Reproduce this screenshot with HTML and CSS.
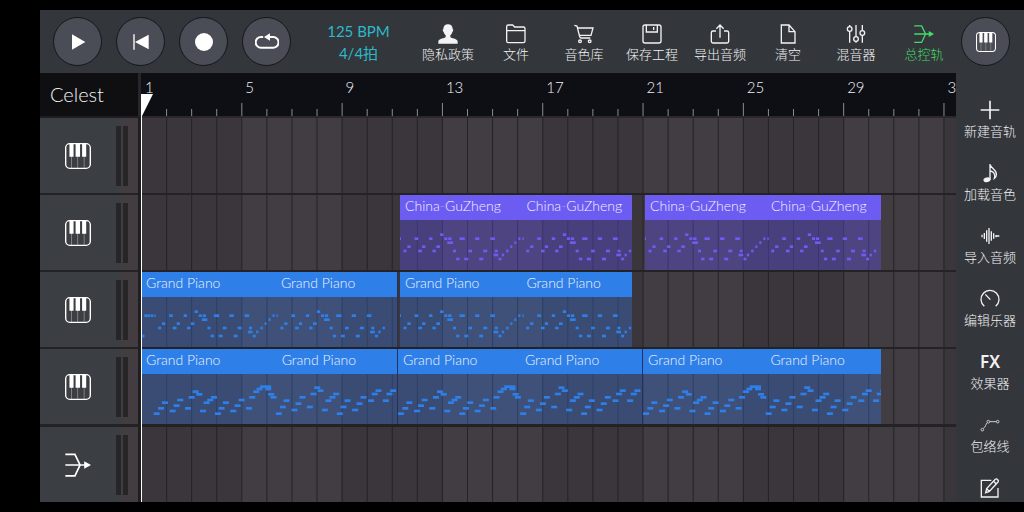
FILE: index.html
```html
<!DOCTYPE html>
<html lang="zh-CN">
<head>
<meta charset="utf-8">
<meta name="viewport" content="width=device-width, initial-scale=1">
<title>Celest</title>
<link rel="stylesheet" href="styles.css">
</head>
<body>
<svg class="defs" aria-hidden="true">
  <symbol id="i-piano" viewBox="0 0 76 76">
    <rect x="2" y="2" width="72" height="72" rx="12" fill="none" stroke="currentColor" stroke-width="4"/>
    <path d="M19 38V73M37 38V73M56 38V73" stroke="currentColor" stroke-width="2" opacity=".5"/>
    <path d="M13 3h12v37H13zM31 3h13v37H31zM50 3h12v37H50z" fill="currentColor"/>
  </symbol>
  <symbol id="i-master" viewBox="0 0 76 76">
    <path d="M1 7H29L44 38L29 70H1M1 38H60" fill="none" stroke="currentColor" stroke-width="5"/>
    <path d="M56 27L76 38L56 49z" fill="currentColor"/>
  </symbol>
</svg>
<div class="app">
  <header class="topbar">
    <div class="transport">
      <button class="round" aria-label="播放"><svg class="ic20" viewBox="0 0 60 60"><path d="M12 7L52 30L12 53z" fill="currentColor"/></svg></button>
      <button class="round" aria-label="回到开头"><svg class="ic20" viewBox="0 0 60 60"><path d="M9 7V53" stroke="currentColor" stroke-width="4"/><path d="M53 8V52L12 30z" fill="currentColor"/></svg></button>
      <button class="round" aria-label="录音"><svg class="ic20" viewBox="0 0 60 60"><circle cx="30" cy="30" r="27" fill="currentColor"/></svg></button>
      <button class="round" aria-label="循环"><svg class="ic24" viewBox="0 0 72 72"><path d="M22 21H18a15 15 0 0 0 0 32H53a15 15 0 0 0 3-32H34" fill="none" stroke="currentColor" stroke-width="6" stroke-linecap="round"/><path d="M27 21L45 10V32z" fill="currentColor"/></svg></button>
    </div>
    <button class="tempo"><span>125 BPM</span><span>4/4拍</span></button>
    <nav class="tools">
      <button class="tool"><svg class="ic20" viewBox="0 0 60 60"><path d="M30 1c9 0 14 6 14 14 3 1 2 7-1 9-1 5-4 8-6 10v5c0 4 22 4 22 14v6H1v-6c0-10 22-10 22-14v-5c-2-2-5-5-6-10-3-2-4-8-1-9C16 7 21 1 30 1z" fill="currentColor"/></svg><span>隐私政策</span></button>
      <button class="tool"><svg class="ic20 line" viewBox="0 0 60 60"><path d="M2 8q0-5 5-5h13l6 6h26q5 0 5 5v37q0 5-5 5H7q-5 0-5-5zM2 20H57"/></svg><span>文件</span></button>
      <button class="tool"><svg class="ic20 line" viewBox="0 0 60 60"><path d="M1 4l8 2L17 38q1 4 5 4H49M10 12H57L51 34H16"/><circle cx="18" cy="52" r="4"/><circle cx="47" cy="52" r="4"/></svg><span>音色库</span></button>
      <button class="tool"><svg class="ic20 line" viewBox="0 0 60 60"><rect x="3" y="3" width="54" height="54" rx="6"/><path d="M13 3V24H46V3M35 9V18"/></svg><span>保存工程</span></button>
      <button class="tool"><svg class="ic20 line" viewBox="0 0 60 60"><path d="M18 21H9q-5 0-5 5V52q0 5 5 5H51q5 0 5-5V26q0-5-5-5H42M30 41V3M19 14L30 3L41 14"/></svg><span>导出音频</span></button>
      <button class="tool"><svg class="ic20 line" viewBox="0 0 60 60"><path d="M10 3H33L51 23V57H10zM33 3V23H51"/></svg><span>清空</span></button>
      <button class="tool"><svg class="ic20 line" viewBox="0 0 60 60"><path d="M11 3V8M11 22V56M30 3V38M30 52V56M49 3V20M49 34V56"/><circle cx="11" cy="15" r="7"/><circle cx="30" cy="45" r="7"/><circle cx="49" cy="27" r="7"/></svg><span>混音器</span></button>
      <button class="tool active"><svg class="ic20"><use href="#i-master"/></svg><span>总控轨</span></button>
    </nav>
    <button class="round" aria-label="键盘"><svg class="ic20"><use href="#i-piano"/></svg></button>
  </header>

  <main class="arranger">
    <h1 class="title">Celest</h1>
    <div class="ruler">
      <svg class="ticks" id="ticks" aria-hidden="true"></svg>
      <div class="numbers" id="numbers"></div>
    </div>
    <div class="heads" id="heads"></div>
    <div class="lanes">
      <svg class="grid" id="grid" aria-hidden="true"></svg>
      <div class="lane-list" id="lanes"></div>
      <svg class="playhead" viewBox="0 0 12 22" aria-hidden="true"><path d="M0 0H12L1 22H0z" fill="#fff"/></svg>
    </div>
  </main>

  <aside class="side">
    <button class="item"><svg class="ic20" viewBox="0 0 60 60"><path d="M30 2V58M2 30H58" stroke="currentColor" stroke-width="5"/></svg><span>新建音轨</span></button>
    <button class="item"><svg class="ic20" viewBox="0 0 60 60"><ellipse cx="21" cy="50" rx="11" ry="7" transform="rotate(-15 21 50)" fill="currentColor"/><path d="M30 50V3c2 14 21 17 19 32 0 6-3 9-6 11 4-14-3-20-11-22" fill="none" stroke="currentColor" stroke-width="4"/></svg><span>加载音色</span></button>
    <button class="item"><svg class="ic20" viewBox="0 0 60 60"><path d="M6 26V34M13 21V39M20 13V47M27 6V54M34 16V44M41 22V38M48 27V34M50 30H58" stroke="currentColor" stroke-width="4"/></svg><span>导入音频</span></button>
    <button class="item"><svg class="ic20 line" viewBox="0 0 60 60"><path d="M13 52A27 27 0 1 1 47 52M31 32L16 16"/></svg><span>编辑乐器</span></button>
    <button class="item"><b class="fx">FX</b><span>效果器</span></button>
    <button class="item"><svg class="ic20 line thin" viewBox="0 0 60 60"><circle cx="7" cy="44" r="4"/><circle cx="25" cy="20" r="4"/><circle cx="53" cy="20" r="4"/><path d="M10 40C18 36 16 28 22 23M29 20H49"/></svg><span>包络线</span></button>
    <button class="item" aria-label="编辑"><svg class="ic20 line" viewBox="0 0 60 60"><path d="M34 7H4V57H54V30M17 44L20 32L46 4q3-3 7 1t1 7L28 40zM41 10L49 18M20 32L28 40"/></svg></button>
  </aside>
</div>
<script src="app.js"></script>
</body>
</html>
```

FILE: styles.css
```css
* {
  box-sizing: border-box;
}

body {
  margin: 0;
  background: #000;
  color: #f2f2f4;
  font-family: Lato, "Noto Sans CJK SC", sans-serif;
  font-weight: 300;
}

button {
  margin: 0;
  padding: 0;
  border: 0;
  background: none;
  color: inherit;
  font: inherit;
}

svg {
  display: block;
}

.defs {
  position: absolute;
  width: 0;
  height: 0;
}

.app {
  display: grid;
  grid-template: 63px minmax(0, 1fr) / minmax(0, 1fr) 68px;
  height: 100vh;
  min-height: 300px;
  padding: 10px 0 10px 40px;
}

.ic20 {
  width: 20px;
  height: 20px;
}

.ic24 {
  width: 24px;
  height: 24px;
}

.ic26 {
  width: 26px;
  height: 26px;
}

.line {
  fill: none;
  stroke: currentColor;
  stroke-width: 4;
}

.thin {
  stroke-width: 3;
  opacity: 0.8;
}

/* Top bar */

.topbar {
  grid-column: 1 / -1;
  display: flex;
  align-items: center;
  padding: 0 14px 0 13px;
  background: #33363a;
}

.transport {
  display: flex;
  gap: 14px;
}

.round {
  display: grid;
  place-items: center;
  width: 49px;
  height: 49px;
  border: 1px solid #15161b;
  border-radius: 50%;
  background: #4a4c56;
  color: #fff;
}

.tempo {
  display: flex;
  flex: 1;
  flex-direction: column;
  align-items: center;
  padding-left: 12px;
  color: #2cb9cb;
  font-size: 15px;
  font-weight: 400;
  line-height: 22px;
}

.tools {
  display: flex;
  margin-right: 3px;
}

.tool {
  display: flex;
  flex-direction: column;
  align-items: center;
  width: 68px;
  padding-top: 4px;
  font-family: "Noto Sans CJK SC", sans-serif;
  font-size: 13px;
  line-height: 20px;
}

.active {
  color: #43dc68;
}

/* Arranger */

.arranger {
  display: grid;
  grid-template: 45px minmax(0, 1fr) / 101px minmax(0, 1fr);
}

.title {
  margin: 0;
  padding-left: 10px;
  border-right: 3px solid #26262b;
  border-bottom: 2px solid #1f1d20;
  background: #0f0f11;
  font-size: 20px;
  font-weight: 300;
  line-height: 43px;
}

.ruler {
  position: relative;
  overflow: hidden;
  border-bottom: 2px solid #2b282c;
  background: #0e0e15;
}

.ticks {
  width: 100%;
  height: 43px;
  fill: #8b8b91;
}

.numbers {
  position: absolute;
  inset: 0;
}

.numbers span {
  position: absolute;
  top: 4px;
  left: calc(var(--bar) / 32.5 * 100%);
  padding-left: 4px;
  font-size: 15px;
  line-height: 20px;
}

.heads,
.lane-list {
  display: flex;
  flex-direction: column;
}

.heads {
  border-right: 3px solid #1f1e21;
}

.head,
.lane {
  flex: 1 1 0;
  min-height: 0;
  border-bottom: 2px solid #232224;
}

.head {
  display: flex;
  align-items: center;
  gap: 2px;
  padding: 0 10px 0 25px;
  background: linear-gradient(90deg, #3b3e42 75px, #433d42 85px);
  color: #fff;
}

.head:nth-child(4),
.lane:nth-child(4) {
  border-bottom-width: 3px;
}

.head:last-child,
.lane:last-child {
  border-bottom: 0;
}

.head .ic26 {
  margin-right: auto;
}

.meter {
  width: 5px;
  height: 60px;
  background: #262628;
}

.lanes {
  position: relative;
  display: grid;
  background: #3a363b;
}

.grid {
  position: absolute;
  width: 100%;
  height: 100%;
}

.shade {
  fill: #423d42;
}

.bar {
  fill: #242326;
}

.lane-list {
  position: relative;
  overflow: hidden;
}

.lane {
  position: relative;
}

.playhead {
  position: absolute;
  top: -24px;
  left: 0;
  width: 12px;
  height: 22px;
}

.lanes::after {
  content: "";
  position: absolute;
  inset: -2px auto 0 0;
  width: 1px;
  background: #fff;
}

/* Clips sit on the timeline at their bar positions */

.clip {
  position: absolute;
  top: 0;
  bottom: 0;
  left: calc(var(--start) / 32.5 * 100%);
  display: flex;
  flex-direction: column;
  width: calc(var(--length) / 32.5 * 100%);
}

.clip.joined {
  border-right: 1px solid #25315a;
}

.blue {
  --head: #2f7fe8;
  --body: #3a74dc5c;
}

.purple {
  --head: #6c5cf2;
  --body: #6050e066;
}

.clip-name {
  display: flex;
  height: 25px;
  background: var(--head);
  color: #eef3fd;
  font-size: 14px;
  line-height: 22px;
  white-space: nowrap;
}

.clip-name span {
  padding-left: 5px;
}

.clip-name span:first-child {
  flex: 0 0 calc(var(--loop) / var(--length) * 100%);
}

.clip-name i {
  opacity: 0.4;
  font-style: normal;
}

.notes {
  flex: 1;
  width: 100%;
  min-height: 0;
  background: var(--body);
  fill: var(--head);
}

/* Side bar */

.side {
  display: flex;
  flex-direction: column;
  overflow: hidden;
  padding-top: 27px;
  background: #33363a;
}

.item {
  display: flex;
  flex: 0 0 63px;
  flex-direction: column;
  align-items: center;
  font-family: "Noto Sans CJK SC", sans-serif;
  font-size: 13px;
  line-height: 21px;
}

.fx {
  height: 20px;
  font-family: "Noto Sans", sans-serif;
  font-size: 17px;
  font-weight: 600;
  line-height: 20px;
}
```

FILE: app.js
```js
const BARS = 32.5;
const NS = "http://www.w3.org/2000/svg";
const pct = (bar) => (bar / BARS) * 100 + "%";

// Note lists: [centre, height in the roll, width]; 75 units make one bar.
const LOOP = 367;
const melody = [
  [1, 56, 4], [15, 93, 9], [27, 80, 10], [49, 56, 11], [60, 93, 11], [71, 80, 10],
  [92, 56, 10], [102, 93, 10], [114, 80, 11], [125, 44, 10], [137, 56, 9], [149, 56, 10],
  [150, 68, 17], [163, 93, 9], [173, 117, 10], [186, 56, 16], [198, 117, 12], [210, 93, 11],
  [231, 56, 13], [243, 117, 12], [255, 93, 12], [277, 56, 14], [287, 105, 14], [288, 93, 9],
  [299, 117, 9], [308, 105, 7], [321, 93, 7], [333, 80, 6], [345, 68, 6], [357, 56, 6]
];
const twice = melody.concat(melody.slice(0, 27).map(([x, y, w]) => [x + LOOP, y, w]));
const intro = [[6, 117, 9], [14, 56, 8], [23, 56, 8], [33, 56, 8]]
  .concat(twice.map(([x, y, w]) => [x + 41, y, w]));

const chords = [
  [9, 119], [22, 103], [34, 86], [57, 111], [69, 95], [80, 78], [103, 103], [114, 70],
  [126, 53], [137, 61], [148, 111], [159, 86], [170, 78], [181, 70], [193, 119], [204, 103],
  [217, 86], [239, 111], [252, 95], [264, 78], [286, 103], [296, 70], [308, 53], [318, 45],
  [328, 38], [344, 38], [344, 45], [353, 61], [360, 70], [376, 119], [388, 99], [399, 80],
  [423, 108], [435, 89], [447, 70], [469, 99], [480, 60], [491, 41], [501, 50], [514, 108],
  [525, 80], [537, 70], [548, 60], [559, 119], [570, 99], [582, 80], [605, 108], [618, 89],
  [630, 70], [653, 80], [664, 60], [675, 50], [697, 80], [708, 60], [719, 50]
].map(([x, y]) => [x, y, 18]);
const lateChords = chords.map(([x, y, w]) => [x + 38, y, w]);

const piano = "Grand Piano";
const zheng = "China<i>-</i>GuZheng";
const clip = (name, color, start, end, loop, notes) => ({ name, color, start, end, loop, notes });

const tracks = [
  { icon: "piano", clips: [] },
  { icon: "piano", clips: [
    clip(zheng, "purple", 10.33, 19.6, 4.84, twice),
    clip(zheng, "purple", 20.1, 29.5, 4.82, twice)
  ] },
  { icon: "piano", clips: [
    clip(piano, "blue joined", 0, 10.25, 5.4, intro),
    clip(piano, "blue", 10.33, 19.6, 4.84, twice)
  ] },
  { icon: "piano", clips: [
    clip(piano, "blue joined", 0, 10.25, 5.43, lateChords),
    clip(piano, "blue joined", 10.25, 20.02, 4.88, chords),
    clip(piano, "blue", 20.02, 29.5, 4.88, chords)
  ] },
  { icon: "master", clips: [] }
];

function rect(parent, attrs) {
  const el = document.createElementNS(NS, "rect");
  for (const key in attrs) el.setAttribute(key, attrs[key]);
  parent.append(el);
}

const ticks = document.getElementById("ticks");
const grid = document.getElementById("grid");
const numbers = document.getElementById("numbers");

for (let bar = 4; bar < BARS; bar += 8) {
  rect(grid, { class: "shade", x: pct(bar), y: 0, width: pct(4), height: "100%" });
}
for (let bar = 0; bar < BARS; bar++) {
  const major = bar % 4 === 0;
  if (bar > 0) {
    rect(grid, { class: "bar", x: pct(bar), y: 0, width: 1, height: "100%" });
    rect(ticks, { x: pct(bar), y: major ? 30 : 36, width: 1, height: major ? 13 : 7 });
  }
  if (major) {
    numbers.insertAdjacentHTML("beforeend", `<span style="--bar:${bar}">${bar + 1}</span>`);
  }
}

const heads = document.getElementById("heads");
const lanes = document.getElementById("lanes");

for (const track of tracks) {
  heads.insertAdjacentHTML("beforeend",
    `<div class="head"><svg class="ic26"><use href="#i-${track.icon}"/></svg>` +
    `<div class="meter"></div><div class="meter"></div></div>`);

  const clips = track.clips.map((c) => {
    const length = c.end - c.start;
    const notes = c.notes.map(([x, y, w]) =>
      `<rect x="${x - w / 2}" y="${y - 4}" width="${w}" height="8"/>`).join("");
    return `<div class="clip ${c.color}" style="--start:${c.start};--length:${length};--loop:${c.loop}">` +
      `<div class="clip-name"><span>${c.name}</span><span>${c.name}</span></div>` +
      `<svg class="notes" viewBox="0 0 ${length * 75} 150" preserveAspectRatio="none">${notes}</svg></div>`;
  }).join("");
  lanes.insertAdjacentHTML("beforeend", `<div class="lane">${clips}</div>`);
}
```
